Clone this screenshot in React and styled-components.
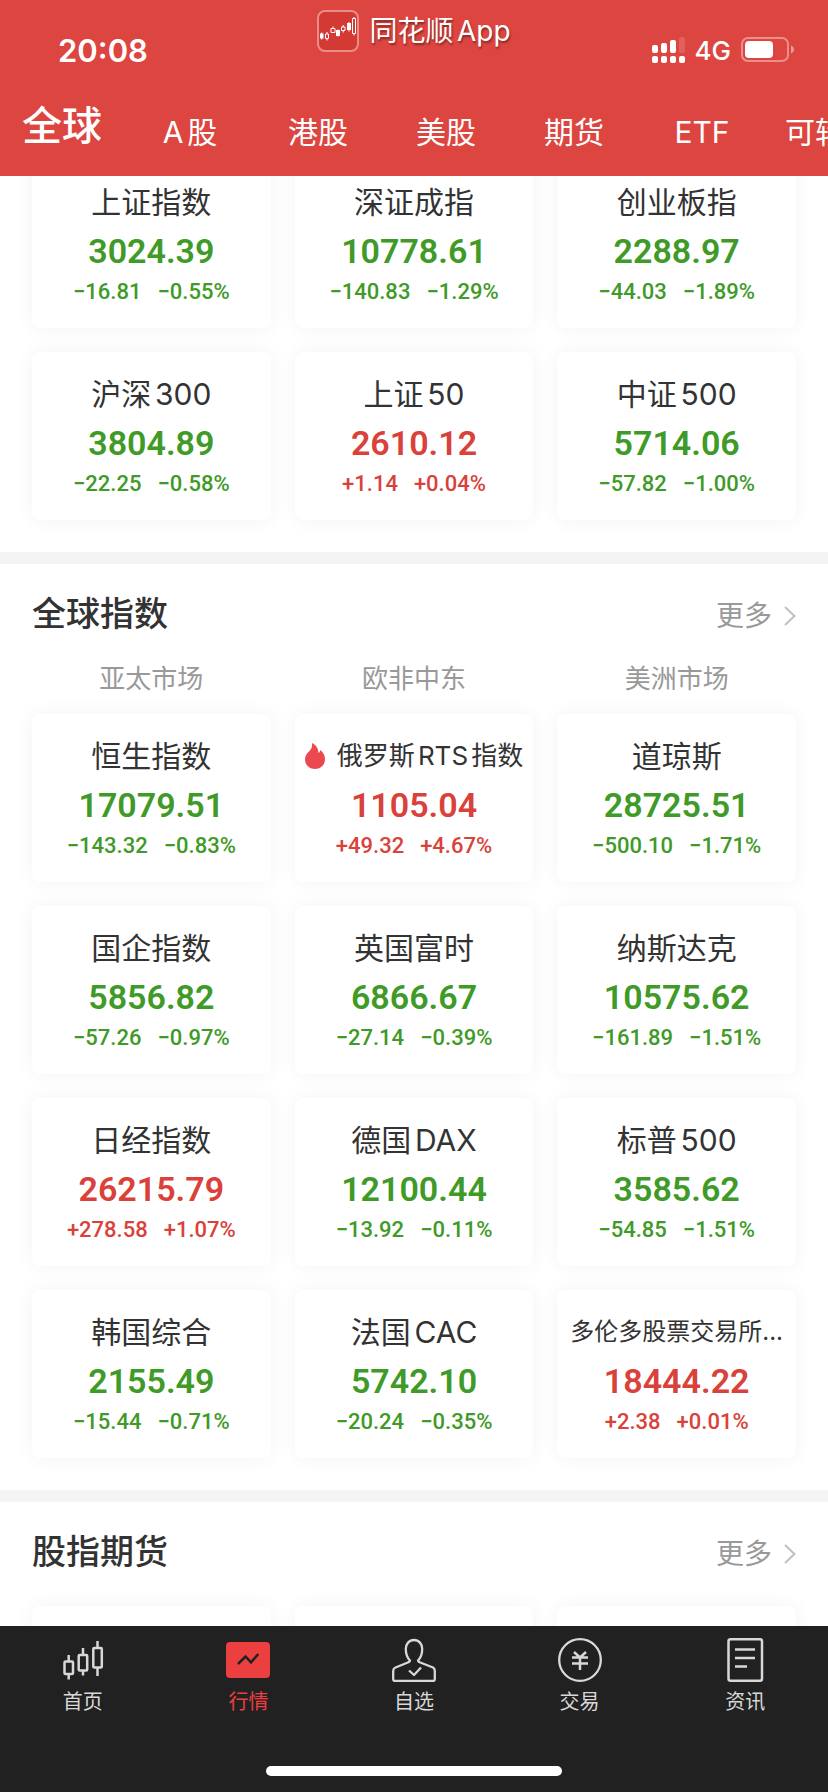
import React from "react"
import styled, { createGlobalStyle } from "styled-components"

const GlobalStyle = createGlobalStyle`
    * {
        box-sizing: border-box;
    }
    body {
        margin: 0;
        background: #ffffff;
        color: #333333;
        font-family: Inter, "Noto Sans CJK SC", sans-serif;
        text-autospace: normal;
    }
    h2, h3, p {
        margin: 0;
        font-weight: 400;
    }
    button {
        border: 0;
        padding: 0;
        background: none;
        font-family: inherit;
        cursor: pointer;
    }
    a {
        color: inherit;
        text-decoration: none;
    }
`

const RED = "#d9413a"
const GREEN = "#409a27"

const Screen = styled.div`
    display: grid;
    grid-template-columns: minmax(0, 1fr);
    grid-template-rows: auto minmax(0, 1fr) auto;
    height: 100vh;
`

const Header = styled.header`
    background: #dd4540;
    color: white;
`

const StatusBar = styled.div`
    display: grid;
    grid-template-columns: 1fr auto 1fr;
    align-items: center;
    height: 100px;
    padding: 0 34px;
`

const Time = styled.time`
    padding-left: 24px;
    font-size: 31px;
    font-weight: 600;
`

const Brand = styled.div`
    display: flex;
    align-items: center;
    align-self: start;
    gap: 10px;
    padding-top: 10px;
    font-size: 28px;
    line-height: 42px;
    text-shadow: 1px 2px 2px rgba(0, 0, 0, 0.4);
`

const Signals = styled.div`
    display: flex;
    align-items: center;
    justify-content: flex-end;
    gap: 10px;
    font-size: 26px;
    font-weight: 500;
`

const Tabs = styled.nav`
    display: flex;
    align-items: flex-start;
    height: 76px;
    margin-left: -2px;
    overflow: hidden;
`

const Tab = styled.button`
    flex: 0 0 128px;
    color: white;
    white-space: nowrap;
    font-size: ${props => props.$active ? "40px" : "30px"};
    font-weight: ${props => props.$active ? 500 : 400};
    line-height: ${props => props.$active ? "52px" : "64px"};
`

const Content = styled.main`
    overflow-y: auto;
    scrollbar-width: none;
`

const Section = styled.section`
    padding: 0 32px 32px;
    border-bottom: 12px solid #f4f4f4;
`

const SectionHeader = styled.div`
    display: flex;
    align-items: flex-end;
    justify-content: space-between;
    height: 104px;
    padding-bottom: 32px;
`

const SectionTitle = styled.h2`
    font-size: 34px;
    font-weight: 500;
    line-height: 44px;
`

const More = styled.a`
    display: flex;
    align-items: center;
    gap: 12px;
    color: #999999;
    font-size: 28px;
    line-height: 40px;
`

const Grid = styled.div`
    display: grid;
    grid-template-columns: repeat(3, minmax(0, 1fr));
    gap: 24px;
`

// The first block sits partly scrolled under the header
const ScrolledGrid = styled(Grid)`
    margin-top: -16px;
`

const Markets = styled(Grid)`
    padding-bottom: 24px;
    color: #999999;
    font-size: 26px;
    line-height: 22px;
    text-align: center;
`

const Card = styled.article`
    min-height: 168px;
    padding: 22px 6px 24px;
    border-radius: 8px;
    background: white;
    box-shadow: 0 0 20px rgba(0, 0, 0, 0.05);
    text-align: center;
`

const CardTitle = styled.h3`
    display: flex;
    align-items: center;
    justify-content: center;
    gap: 12px;
    font-size: ${props => props.$size};
    line-height: 40px;
    white-space: nowrap;
`

const Price = styled.p`
    color: ${props => props.$up ? RED : GREEN};
    font-family: Roboto, sans-serif;
    font-size: 34px;
    font-weight: 600;
    line-height: 58px;
`

const Change = styled.p`
    display: flex;
    justify-content: center;
    gap: 16px;
    color: ${props => props.$up ? RED : GREEN};
    font-family: Roboto, sans-serif;
    font-size: 22px;
    font-weight: 500;
    line-height: 24px;
`

const Footer = styled.footer`
    height: 166px;
    display: flex;
    flex-direction: column;
    justify-content: space-between;
    align-items: center;
    padding: 12px 0 16px;
    background: #212121;
`

const TabBar = styled.nav`
    display: grid;
    grid-template-columns: repeat(5, 1fr);
    width: 100%;
`

const TabItem = styled.a`
    display: flex;
    flex-direction: column;
    align-items: center;
    gap: 6px;
    color: ${props => props.$active ? "#eb3f40" : "#d8d8d8"};
    font-size: 20px;
    line-height: 28px;
`

const HomeIndicator = styled.div`
    width: 296px;
    height: 10px;
    border-radius: 5px;
    background: white;
`

const LogoIcon = () => (
    <svg width="42" height="42" viewBox="0 0 42 42" fill="none" stroke="white">
        <rect x="1" y="1" width="40" height="40" rx="7" fill="#d33a34" stroke="#ea8d89" strokeWidth="2" />
        <path fill="white" stroke="none" d="M3 23.5h3.5v5H3zM19 20h4v6h-4zM30 13h4v7h-4z" />
        <path stroke="white" d="M4.7 22.5v7M21 19.5v7M32 12v9.5" />
        <path d="M8.5 24h3v4.500h-3zM10 22v2M10 28.500v2M14 18.500h4v4h-4zM16 16.500v2M24.500 17h3.500v3.500h-3.500zM26.200 15v2M26.200 20.500v2M35.500 8.500h3v15h-3zM37 7v1.500M37 23.500v2" />
    </svg>
)

const SignalIcon = () => (
    <svg width="33" height="27" viewBox="0 0 33 27" fill="white">
        <rect x="0" y="8" width="6" height="8" rx="2" />
        <rect x="9" y="6" width="6" height="10" rx="2" />
        <rect x="18" y="3" width="6" height="13" rx="2" />
        <rect x="27" y="0" width="6" height="16" rx="2" opacity="0.15" />
        <rect x="0" y="19" width="6" height="7" rx="2" />
        <rect x="9" y="19" width="6" height="7" rx="2" />
        <rect x="18" y="19" width="6" height="7" rx="2" />
        <rect x="27" y="19" width="6" height="7" rx="2" />
    </svg>
)

const BatteryIcon = () => (
    <svg width="53" height="26" viewBox="0 0 53 26" fill="white">
        <rect x="1" y="1" width="46" height="23" rx="6" fill="none" stroke="white" strokeWidth="2" opacity="0.4" />
        <rect x="4" y="4" width="28" height="17" rx="4" />
        <path d="M50 8.500c4 1.500 4 6.500 0 8z" opacity="0.45" />
    </svg>
)

const Chevron = () => (
    <svg width="12" height="20" viewBox="0 0 12 20" fill="none" stroke="#c0c0c0" strokeWidth="2">
        <path d="M1 1l9.500 9L1 19" />
    </svg>
)

const FireIcon = () => (
    <svg width="20" height="26" viewBox="0 0 20 26" fill="#ec4850">
        <path d="M7 0C11 2 13.500 5.500 13.500 10C14.500 9.500 15 8.500 15.200 7C18.500 9.500 20 12.500 20 16.200C20 22 15.500 26 10 26C4.500 26 0 22 0 16.500C0 12.500 2 10.500 4.500 8C6.700 5.700 7.300 3 7 0Z" />
    </svg>
)

const HomeIcon = () => (
    <svg width="44" height="44" viewBox="0 0 44 44" fill="none" stroke="currentColor" strokeWidth="2.500">
        <rect x="3.500" y="23.500" width="8.500" height="12.500" rx="1" />
        <rect x="17.700" y="17" width="8.500" height="15.500" rx="1" />
        <rect x="32.300" y="10" width="8.500" height="19.500" rx="1" />
        <path d="M7.700 17v6M7.700 36v5.500M22 10v6.500M22 32.500V37.500M36.500 3v7M36.500 30v8" />
    </svg>
)

const QuotesIcon = () => (
    <svg width="44" height="44" viewBox="0 0 44 44">
        <rect y="4" width="44" height="36" rx="4" fill="currentColor" />
        <path d="M12 26L19.500 18.500L25 24.300L32.300 16" fill="none" stroke="#212121" strokeWidth="2.500" />
    </svg>
)

const WatchIcon = () => (
    <svg width="44" height="44" viewBox="0 0 44 44" fill="none" stroke="currentColor" strokeWidth="2.300" strokeLinejoin="round">
        <path d="M22 2C17 2 13.800 6 13.800 11C13.800 16 15.500 20 18 22.500L17 24L3 29.700Q1.200 30.500 1.200 33V41Q1.200 43 3 43H41Q42.800 43 42.800 41V33Q42.800 30.500 41 29.500L27 24L26 22.500C28.500 20 30.200 16 30.200 11C30.200 6 27 2 22 2Z" />
        <path d="M17 32.500l5 4.500l7-7.500" />
    </svg>
)

const TradeIcon = () => (
    <svg width="44" height="44" viewBox="0 0 44 44" fill="none" stroke="currentColor" strokeWidth="2.300">
        <circle cx="22" cy="22" r="20.800" />
        <path d="M16 14l6 5.500l6-5.500M14 19.500h16M14 25.500h16M22 19.500V32" strokeWidth="2.500" />
    </svg>
)

const NewsIcon = () => (
    <svg width="44" height="44" viewBox="0 0 44 44" fill="none" stroke="currentColor" strokeWidth="2.500">
        <rect x="5.500" y="1.300" width="33.500" height="41.400" rx="2" />
        <path d="M12 11.500h20M12 20h20M12 28.500h12" />
    </svg>
)

const tabs = ["全球", "A股", "港股", "美股", "期货", "ETF", "可转债"]

const chinaIndexes = [
    { name: "上证指数", price: "3024.39", change: "−16.81", percent: "−0.55%" },
    { name: "深证成指", price: "10778.61", change: "−140.83", percent: "−1.29%" },
    { name: "创业板指", price: "2288.97", change: "−44.03", percent: "−1.89%" },
    { name: "沪深300", price: "3804.89", change: "−22.25", percent: "−0.58%" },
    { name: "上证50", price: "2610.12", change: "+1.14", percent: "+0.04%" },
    { name: "中证500", price: "5714.06", change: "−57.82", percent: "−1.00%" },
]

const globalIndexes = [
    { name: "恒生指数", price: "17079.51", change: "−143.32", percent: "−0.83%" },
    { name: "俄罗斯RTS指数", price: "1105.04", change: "+49.32", percent: "+4.67%", hot: true, size: "26px" },
    { name: "道琼斯", price: "28725.51", change: "−500.10", percent: "−1.71%" },
    { name: "国企指数", price: "5856.82", change: "−57.26", percent: "−0.97%" },
    { name: "英国富时", price: "6866.67", change: "−27.14", percent: "−0.39%" },
    { name: "纳斯达克", price: "10575.62", change: "−161.89", percent: "−1.51%" },
    { name: "日经指数", price: "26215.79", change: "+278.58", percent: "+1.07%" },
    { name: "德国DAX", price: "12100.44", change: "−13.92", percent: "−0.11%" },
    { name: "标普500", price: "3585.62", change: "−54.85", percent: "−1.51%" },
    { name: "韩国综合", price: "2155.49", change: "−15.44", percent: "−0.71%" },
    { name: "法国CAC", price: "5742.10", change: "−20.24", percent: "−0.35%" },
    { name: "多伦多股票交易所...", price: "18444.22", change: "+2.38", percent: "+0.01%", size: "24px" },
]

const navItems = [
    { label: "首页", Icon: HomeIcon },
    { label: "行情", Icon: QuotesIcon, active: true },
    { label: "自选", Icon: WatchIcon },
    { label: "交易", Icon: TradeIcon },
    { label: "资讯", Icon: NewsIcon },
]

const IndexCard = ({ name, price, change, percent, hot, size = "30px" }) => {
    const up = change.startsWith("+")

    return (
        <Card>
            <CardTitle $size={size}>
                {hot && <FireIcon />}
                <span>{name}</span>
            </CardTitle>
            <Price $up={up}>{price}</Price>
            <Change $up={up}>
                <span>{change}</span>
                <span>{percent}</span>
            </Change>
        </Card>
    )
}

const SectionHead = ({ title }) => (
    <SectionHeader>
        <SectionTitle>{title}</SectionTitle>
        <More href="#more">
            更多
            <Chevron />
        </More>
    </SectionHeader>
)

const App = () => (
    <>
        <GlobalStyle />
        <Screen>
            <Header>
                <StatusBar>
                    <Time>20:08</Time>
                    <Brand>
                        <LogoIcon />
                        <span>同花顺App</span>
                    </Brand>
                    <Signals>
                        <SignalIcon />
                        <span>4G</span>
                        <BatteryIcon />
                    </Signals>
                </StatusBar>
                <Tabs>
                    {tabs.map((tab, i) => (
                        <Tab key={tab} type="button" $active={i === 0}>{tab}</Tab>
                    ))}
                </Tabs>
            </Header>
            <Content>
                <Section>
                    <ScrolledGrid>
                        {chinaIndexes.map(item => <IndexCard key={item.name} {...item} />)}
                    </ScrolledGrid>
                </Section>
                <Section>
                    <SectionHead title="全球指数" />
                    <Markets>
                        <span>亚太市场</span>
                        <span>欧非中东</span>
                        <span>美洲市场</span>
                    </Markets>
                    <Grid>
                        {globalIndexes.map(item => <IndexCard key={item.name} {...item} />)}
                    </Grid>
                </Section>
                <Section>
                    <SectionHead title="股指期货" />
                    <Grid>
                        <Card />
                        <Card />
                        <Card />
                    </Grid>
                </Section>
            </Content>
            <Footer>
                <TabBar>
                    {navItems.map(({ label, Icon, active }) => (
                        <TabItem key={label} href="#tab" $active={active}>
                            <Icon />
                            {label}
                        </TabItem>
                    ))}
                </TabBar>
                <HomeIndicator />
            </Footer>
        </Screen>
    </>
)

export default App
